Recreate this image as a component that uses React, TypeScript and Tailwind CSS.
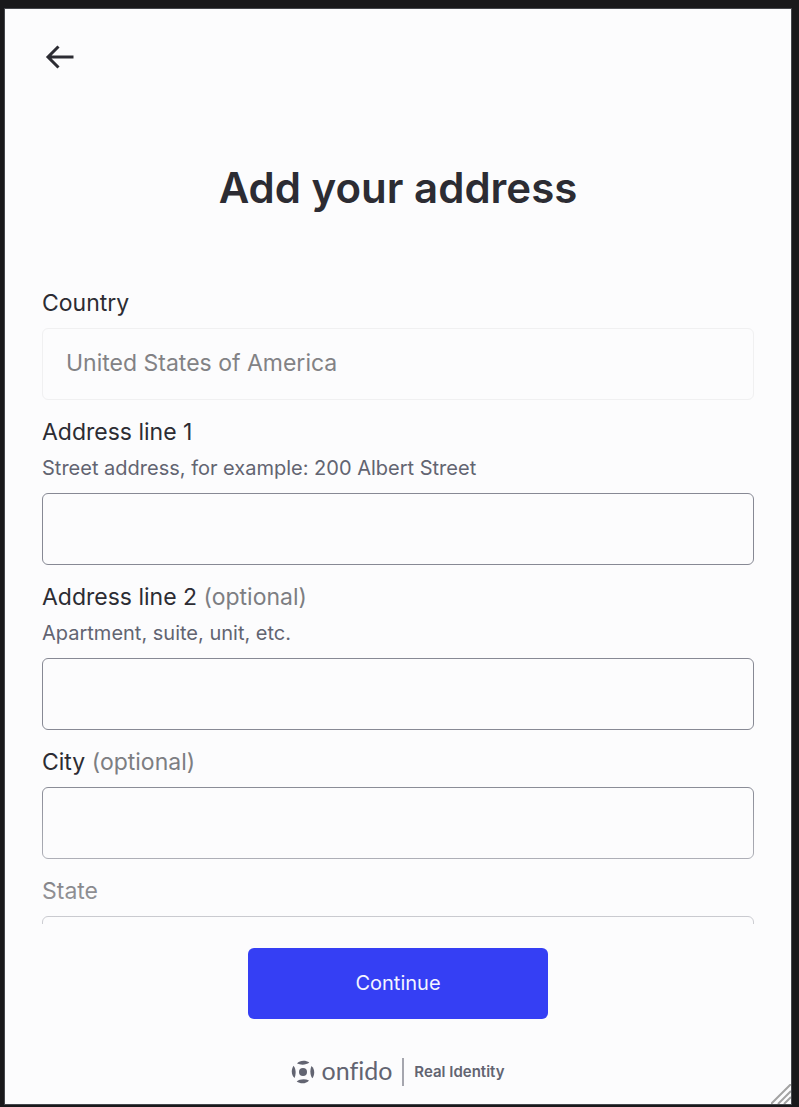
import { useId } from 'react'

// ============================================
// Address capture step
// ============================================

interface FieldProps {
  label: string
  hint?: string
  optional?: boolean
  value?: string
  disabled?: boolean
}

function Field({ label, hint, optional, value, disabled }: FieldProps) {
  const id = useId()

  return (
    <div>
      <label htmlFor={id} className="block text-[23px] leading-9 text-[#2c2c33]">
        {label}
        {optional && <span className="text-[#7d7e82]"> (optional)</span>}
      </label>
      {hint && (
        <p id={`${id}-hint`} className="text-[20px] leading-9 text-[#626471]">
          {hint}
        </p>
      )}
      <input
        id={id}
        type="text"
        defaultValue={value}
        disabled={disabled}
        aria-describedby={hint ? `${id}-hint` : undefined}
        className="mt-[7px] block h-18 w-full rounded-md border border-[#878994] bg-transparent px-[23px] pb-[2px] text-[23px] text-[#2c2c33] outline-none focus:border-[#353ff4] disabled:border-[#f0f0f1] disabled:text-[#828285]"
      />
    </div>
  )
}

function Logo() {
  return (
    <div className="flex items-center justify-center text-[#626471]">
      <svg viewBox="0 0 24 24" className="size-6" fill="currentColor" aria-hidden="true">
        <circle cx="12" cy="12" r="4" />
        <path d="M6 3.600C8.500.3 14.500-.2 18.300 2.600C15.500 4.900 10 5.300 6 3.600Z" />
        <path d="M18 20.400C15.500 23.700 9.500 24.200 5.700 21.400C8.500 19.100 14 18.700 18 20.400Z" />
        <path d="M3.600 18C.3 15.500-.2 9.500 2.600 5.700C4.900 8.500 5.300 14 3.600 18Z" />
        <path d="M20.400 6C23.700 8.500 24.200 14.500 21.400 18.300C19.100 15.500 18.700 10 20.400 6Z" />
      </svg>
      <span className="ml-[6px] pb-1 font-[Lato,sans-serif] text-[25px] leading-7 [font-variant-ligatures:none]">onfido</span>
      <span className="ml-[10px] h-7 w-[2px] bg-[#a5a6ae]" />
      <span className="ml-[10px] text-[15px] leading-7 font-semibold">Real Identity</span>
    </div>
  )
}

export default function App() {
  return (
    <div className="flex h-screen bg-[#19191b] pt-[9px] pr-2 pb-[3px] pl-[5px] font-[Inter,sans-serif]">
      <main className="relative flex flex-1 flex-col bg-[#fcfcfd] outline outline-[#44464b]">
        {/* ── Header ── */}
        <header className="px-[37px] pt-[30px]">
          <button type="button" aria-label="Back" className="flex size-9 items-center justify-center">
            <svg viewBox="0 0 36 36" className="size-9" fill="none" stroke="#2c2c33" strokeWidth="3" aria-hidden="true">
              <path d="M31.500 18H6M16.500 7.500L6 18l10.500 10.500" />
            </svg>
          </button>
        </header>

        {/* ── Scrolling form ── */}
        <div className="relative min-h-0 flex-1">
          <form id="address" className="h-full overflow-y-auto px-[37px] pt-[86px] [scrollbar-width:none]">
            <h1 className="mb-[70px] text-center text-[42px] leading-[54px] font-semibold text-[#2c2c33]">
              Add your address
            </h1>
            <div className="flex flex-col gap-[14px]">
              <Field label="Country" value="United States of America" disabled />
              <Field label="Address line 1" hint="Street address, for example: 200 Albert Street" />
              <Field label="Address line 2" hint="Apartment, suite, unit, etc." optional />
              <Field label="City" optional />
              <Field label="State" />
            </div>
          </form>
          <div className="pointer-events-none absolute inset-x-0 bottom-0 h-36 bg-linear-to-b from-[#fcfcfd]/0 to-[#fcfcfd]/60" />
        </div>

        {/* ── Actions ── */}
        <footer className="px-[37px] pt-6 pb-4">
          <button
            type="submit"
            form="address"
            className="mx-auto mb-[37px] block h-[71px] w-full max-w-[300px] rounded-md bg-[#353ff4] pb-[2px] text-[20px] text-[#f4f4ff]"
          >
            Continue
          </button>
          <Logo />
        </footer>

        {/* Resize grip */}
        <svg viewBox="0 0 20 20" className="absolute right-0 bottom-0 size-5" stroke="#a3a3a3" strokeWidth="2" aria-hidden="true">
          <path d="M0 20L20 0M7 20L20 7M13 20L20 13" />
        </svg>
      </main>
    </div>
  )
}
